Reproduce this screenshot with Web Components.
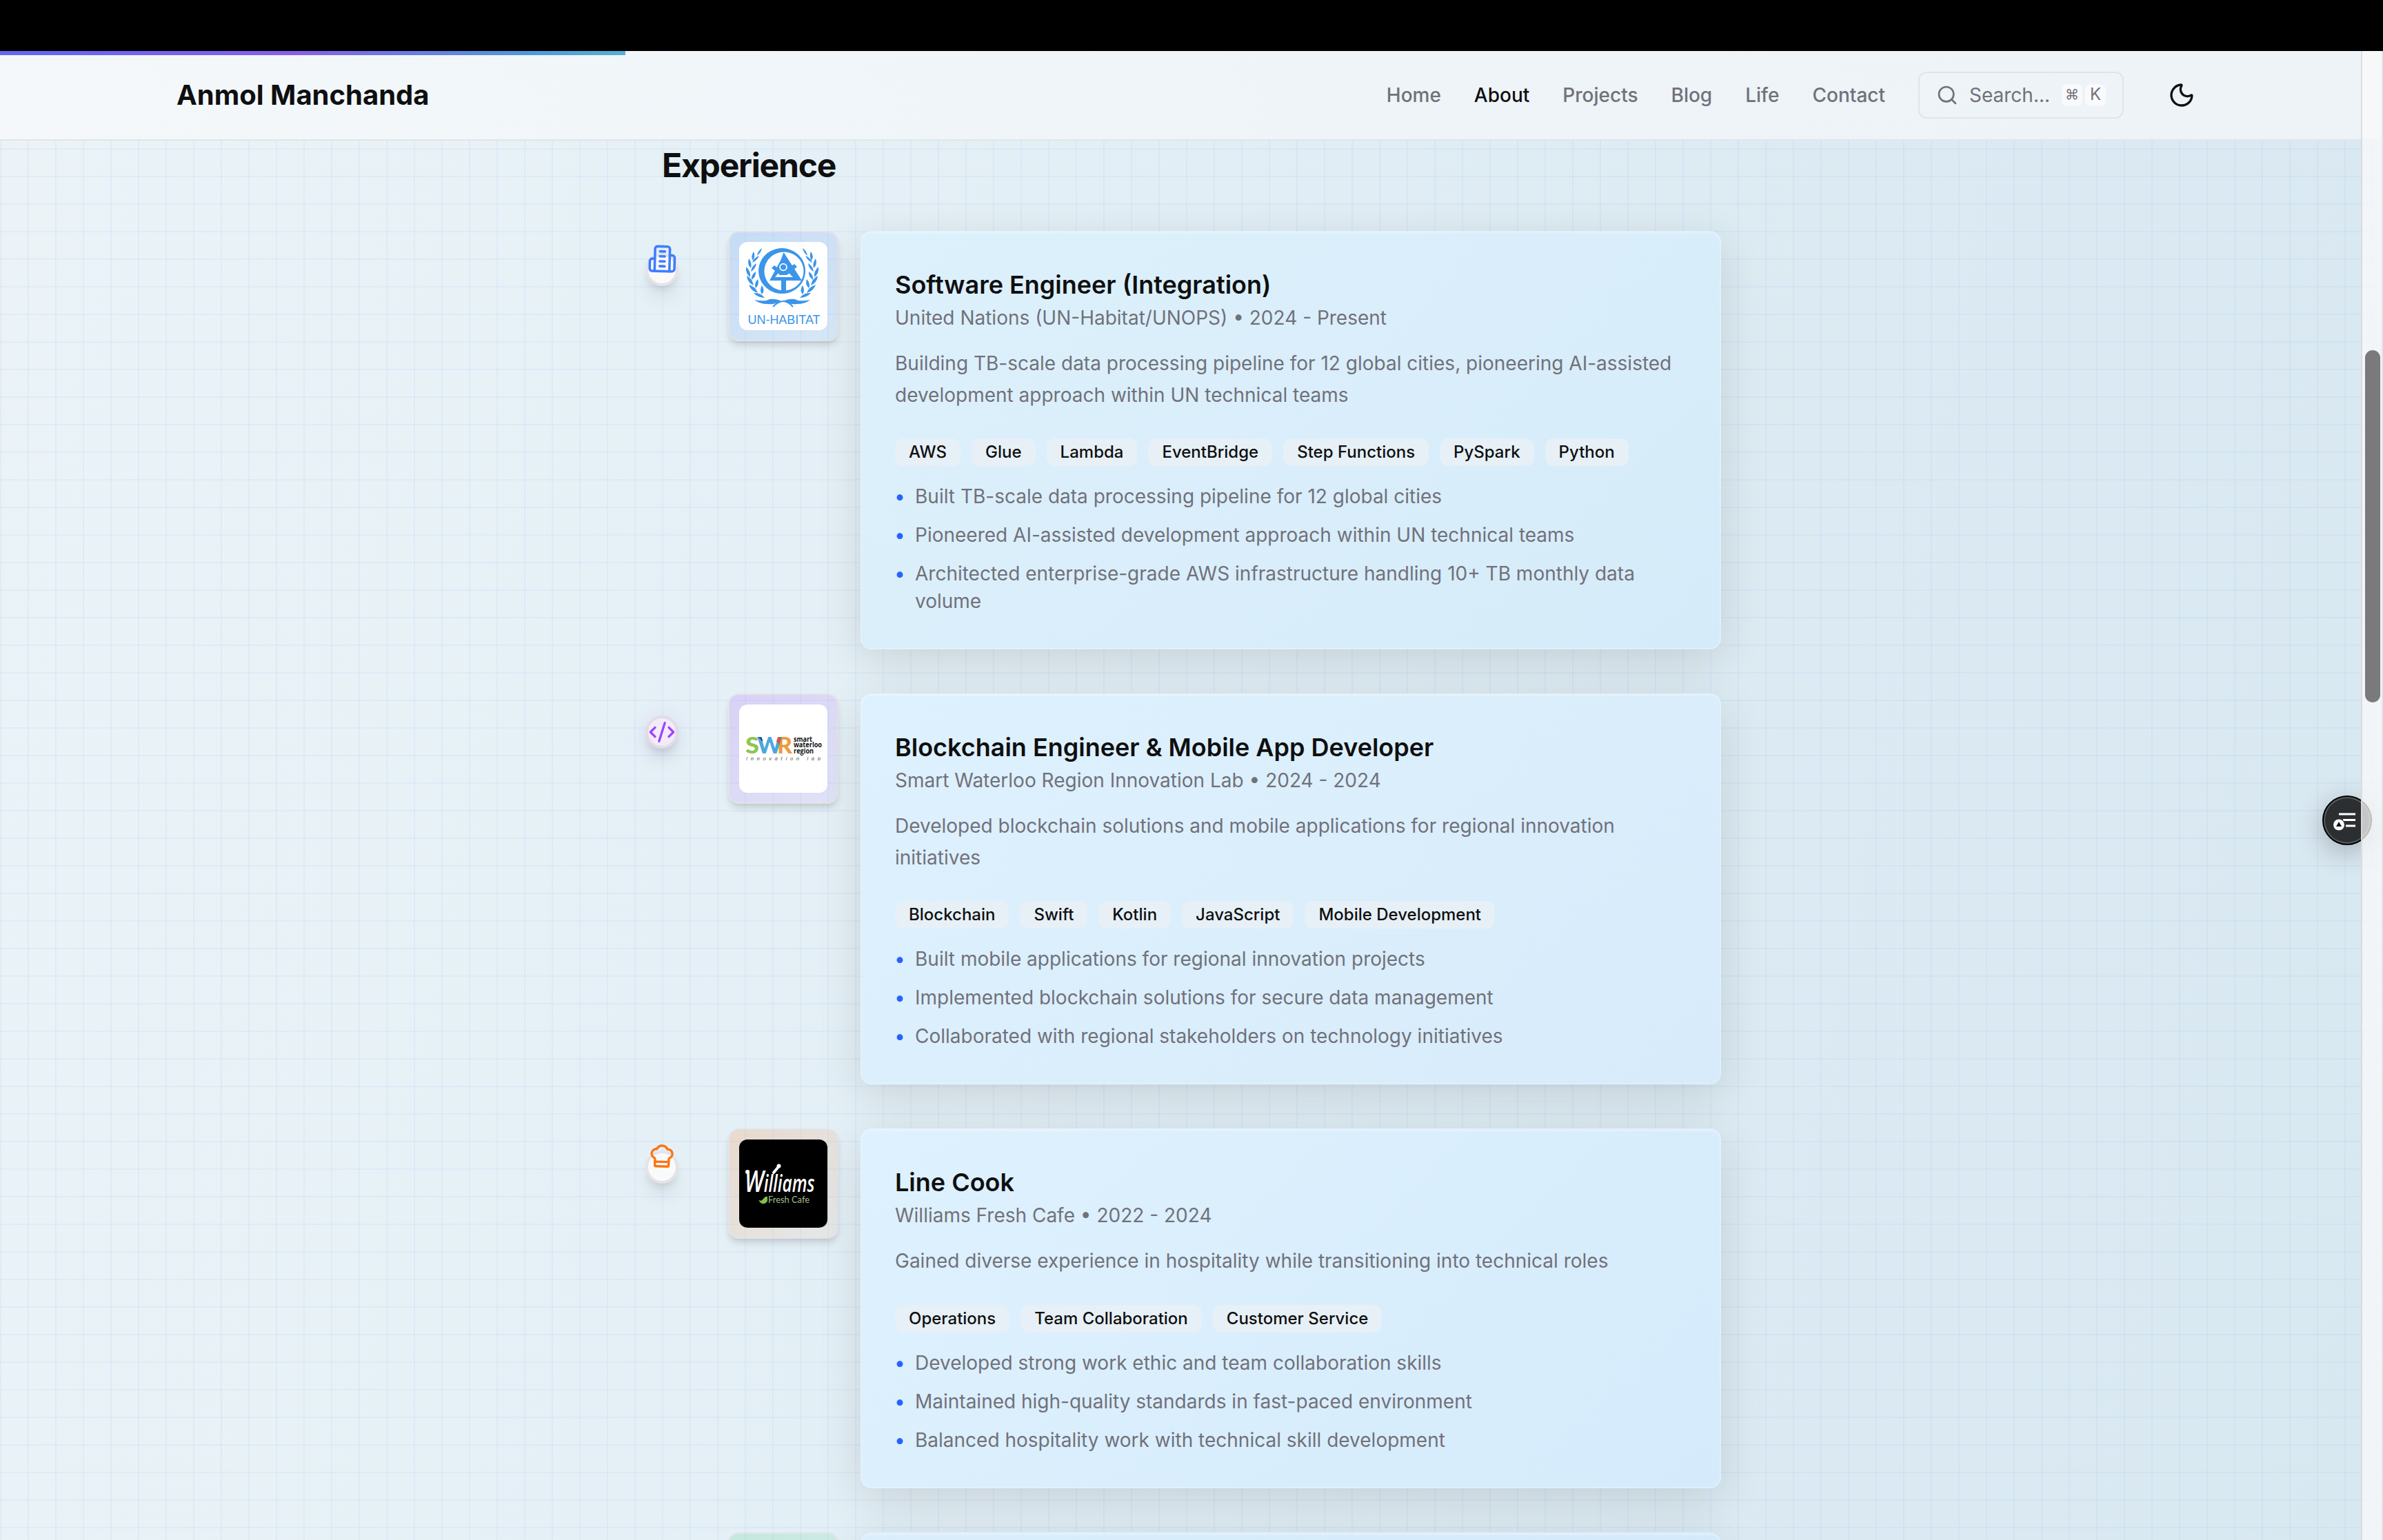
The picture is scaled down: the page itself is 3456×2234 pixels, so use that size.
<!DOCTYPE html>
<html lang="en">
<head>
<meta charset="utf-8">
<title>Anmol Manchanda</title>
<style>
html,body{margin:0;height:100%}
body{height:2234px;overflow:hidden;font-family:Inter,"Noto Sans",sans-serif;color:#0f0f10;background:#000}
</style>
</head>
<body>
<portfolio-page>
  <site-header slot="header" name="Anmol Manchanda">
    <nav-link>Home</nav-link>
    <nav-link active>About</nav-link>
    <nav-link>Projects</nav-link>
    <nav-link>Blog</nav-link>
    <nav-link>Life</nav-link>
    <nav-link>Contact</nav-link>
    <search-box slot="tools"></search-box>
    <theme-toggle slot="tools"></theme-toggle>
  </site-header>

  <timeline-section heading="Experience">
    <timeline-item style="--tint-a:rgba(59,130,246,.19);--tint-b:rgba(59,130,246,.08)">
      <timeline-dot slot="dot" icon="building" style="--ink:#3f7dff;--lift:-16px;--size:43px;--tilt:1.5deg"></timeline-dot>
      <logo-un slot="logo"></logo-un>
      <exp-card role-title="Software Engineer (Integration)" meta="United Nations (UN-Habitat/UNOPS) • 2024 - Present" style="--card-a:#ddf1fc;--card-b:#d6ebf9">
        Building TB-scale data processing pipeline for 12 global cities, pioneering AI-assisted development approach within UN technical teams
        <skill-badge slot="skills">AWS</skill-badge><skill-badge slot="skills">Glue</skill-badge><skill-badge slot="skills">Lambda</skill-badge><skill-badge slot="skills">EventBridge</skill-badge><skill-badge slot="skills">Step Functions</skill-badge><skill-badge slot="skills">PySpark</skill-badge><skill-badge slot="skills">Python</skill-badge>
        <bullet-line slot="points">Built TB-scale data processing pipeline for 12 global cities</bullet-line>
        <bullet-line slot="points">Pioneered AI-assisted development approach within UN technical teams</bullet-line>
        <bullet-line slot="points">Architected enterprise-grade AWS infrastructure handling 10+ TB monthly data volume</bullet-line>
      </exp-card>
    </timeline-item>

    <timeline-item style="--tint-a:rgba(168,85,247,.2);--tint-b:rgba(168,85,247,.08)">
      <timeline-dot slot="dot" icon="code" style="--ink:#a043ff;--dot-bg:#f2ecfa;--dot-line:#e2dce7;--glow:rgba(168,85,247,.12);--size:40px;--tilt:0deg"></timeline-dot>
      <logo-swr slot="logo"></logo-swr>
      <exp-card role-title="Blockchain Engineer &amp; Mobile App Developer" meta="Smart Waterloo Region Innovation Lab • 2024 - 2024" style="--card-a:#def1fe;--card-b:#d7ebfa">
        Developed blockchain solutions and mobile applications for regional innovation initiatives
        <skill-badge slot="skills">Blockchain</skill-badge><skill-badge slot="skills">Swift</skill-badge><skill-badge slot="skills">Kotlin</skill-badge><skill-badge slot="skills">JavaScript</skill-badge><skill-badge slot="skills">Mobile Development</skill-badge>
        <bullet-line slot="points">Built mobile applications for regional innovation projects</bullet-line>
        <bullet-line slot="points">Implemented blockchain solutions for secure data management</bullet-line>
        <bullet-line slot="points">Collaborated with regional stakeholders on technology initiatives</bullet-line>
      </exp-card>
    </timeline-item>

    <timeline-item style="--tint-a:rgba(249,115,22,.18);--tint-b:rgba(249,115,22,.06)">
      <timeline-dot slot="dot" icon="chef" style="--ink:#fb7412;--lift:-16px;--size:40px;--tilt:1.5deg"></timeline-dot>
      <logo-williams slot="logo"></logo-williams>
      <exp-card role-title="Line Cook" meta="Williams Fresh Cafe • 2022 - 2024" style="--card-a:#def1fe;--card-b:#d5ebfb">
        Gained diverse experience in hospitality while transitioning into technical roles
        <skill-badge slot="skills">Operations</skill-badge><skill-badge slot="skills">Team Collaboration</skill-badge><skill-badge slot="skills">Customer Service</skill-badge>
        <bullet-line slot="points">Developed strong work ethic and team collaboration skills</bullet-line>
        <bullet-line slot="points">Maintained high-quality standards in fast-paced environment</bullet-line>
        <bullet-line slot="points">Balanced hospitality work with technical skill development</bullet-line>
      </exp-card>
    </timeline-item>

    <timeline-item style="--tint-a:rgba(34,197,94,.16);--tint-b:rgba(34,197,94,.08)">
      <exp-card style="--card-a:#daeefc;--card-b:#d4eafb"></exp-card>
    </timeline-item>
  </timeline-section>

  <reader-button slot="overlay"></reader-button>
  <page-scrollbar slot="overlay"></page-scrollbar>
</portfolio-page>

<script>
const define = (name, html, setup) => {
  const template = document.createElement('template');
  template.innerHTML = html;
  customElements.define(name, class extends HTMLElement {
    constructor() {
      super();
      this.attachShadow({ mode: 'open' }).append(template.content.cloneNode(true));
    }
    connectedCallback() { if (setup) setup(this, this.shadowRoot); }
  });
};

define('portfolio-page', `
<style>
:host{display:flex;flex-direction:column;height:2234px;overflow:hidden;position:relative}
.top{flex:none;height:74px;background:#000}
.view{flex:1;min-height:0;display:flex;flex-direction:column;overflow:hidden;
 background:
 repeating-linear-gradient(90deg,rgba(99,132,246,.065) 0 2px,transparent 2px 40px),
 repeating-linear-gradient(180deg,rgba(99,132,246,.065) 0 2px,transparent 2px 40px) 0 -19px/100% 2240px,
 linear-gradient(100deg,#ebf3f7 0%,#e4f0f6 35%,#ddebf3 65%,#d8e8f1 100%)}
</style>
<div class="top"></div>
<div class="view"><slot name="header"></slot><slot></slot></div>
<slot name="overlay"></slot>`);

define('site-header', `
<style>
:host{display:block;flex:none;box-sizing:border-box;height:130px;border-bottom:2px solid #e3e4e7;
 background:linear-gradient(90deg,#f4f8fb,#eef4f8 60%,#edf3f7);position:relative}
.progress{position:absolute;left:0;top:0;width:907px;height:6px;background:linear-gradient(90deg,#6366f1,#875feb 48%,#4f97dc 83%,#52b3cf)}
.row{height:128px;padding:0 256px;display:flex;align-items:center;justify-content:space-between}
.name{font-size:40px;font-weight:700;line-height:56px;white-space:nowrap}
.right{display:flex;align-items:center;gap:48px}
</style>
<div class="progress"></div>
<div class="row"><span class="name"></span><div class="right"><slot></slot><slot name="tools"></slot></div></div>`,
(host, root) => { root.querySelector('.name').textContent = host.getAttribute('name'); });

define('nav-link', `
<style>:host{display:block;font-size:28px;line-height:40px;font-weight:500;color:#71717a;white-space:nowrap}
:host([active]){color:#0f0f10}</style><slot></slot>`);

define('search-box', `
<style>
:host{display:flex;align-items:center;box-sizing:border-box;width:298px;height:68px;padding:0 24px;border:2px solid #e3e4e7;border-radius:12px;color:#71717a;font-size:28px;line-height:40px}
svg{width:32px;height:32px;margin-right:16px}
.keys{display:flex;gap:4px;margin-left:auto}
kbd{box-sizing:border-box;width:30px;height:32px;border-radius:8px;background:#f9fafc;font:20px/30px Inter,"DejaVu Sans",sans-serif;text-align:center}
.k{font-size:24px}
</style>
<svg viewBox="0 0 24 24" fill="none" stroke="currentColor" stroke-width="2" stroke-linecap="round"><circle cx="11" cy="11" r="8"/><path d="m21 21-4.3-4.3"/></svg>
<span>Search...</span><span class="keys"><kbd>⌘</kbd><kbd class="k">K</kbd></span>`);

define('theme-toggle', `
<style>:host{display:flex;width:72px;height:72px;align-items:center;justify-content:center}svg{width:40px;height:40px}</style>
<svg viewBox="0 0 24 24" fill="none" stroke="#0f0f10" stroke-width="2" stroke-linecap="round" stroke-linejoin="round"><path d="M20.985 12.486a9 9 0 1 1-9.473-9.472c.405-.022.617.46.402.803a6 6 0 0 0 8.268 8.268c.344-.215.825-.004.803.401"/></svg>`);

define('timeline-section', `
<style>
:host{display:block;width:1536px;margin:0 auto;flex:none}
h2{margin:0;padding-top:6px;font-size:48px;line-height:60px;font-weight:700;letter-spacing:-1.2px;height:125px}
.list{display:flex;flex-direction:column;gap:64px}
</style><h2></h2><div class="list"><slot></slot></div>`,
(host, root) => { root.querySelector('h2').textContent = host.getAttribute('heading'); });

define('timeline-item', `
<style>
:host{display:flex;align-items:flex-start;margin-left:-24px}
.dot{width:48px;margin-right:72px;padding-top:32px;flex:none}
.logo{box-sizing:border-box;width:160px;height:160px;flex:none;margin-right:32px;border:2px solid #e3e3e7;border-radius:16px;
 display:flex;align-items:center;justify-content:center;
 background:linear-gradient(135deg,var(--tint-a),var(--tint-b));box-shadow:0 8px 12px -2px rgba(0,0,0,.12),0 4px 8px -4px rgba(0,0,0,.1)}
.body{flex:1;min-width:0;display:block}
</style>
<div class="dot"><slot name="dot"></slot></div><div class="logo"><slot name="logo"></slot></div><div class="body"><slot></slot></div>`);

const icons = {
  building: '<path d="M6 22V4a2 2 0 0 1 2-2h8a2 2 0 0 1 2 2v18Z"/><path d="M6 12H4a2 2 0 0 0-2 2v6a2 2 0 0 0 2 2h2"/><path d="M18 9h2a2 2 0 0 1 2 2v9a2 2 0 0 1-2 2h-2"/><path d="M10 6h4M10 10h4M10 14h4M10 18h4"/>',
  code: '<path d="m18 16 4-4-4-4"/><path d="m6 8-4 4 4 4"/><path d="m14.5 4-5 16"/>',
  chef: '<path d="M17 21a1 1 0 0 0 1-1v-5.35c0-.457.316-.844.727-1.041a4 4 0 0 0-2.134-7.589 5 5 0 0 0-9.186 0 4 4 0 0 0-2.134 7.588c.411.198.727.585.727 1.041V20a1 1 0 0 0 1 1Z"/><path d="M6 17h12"/>'
};
define('timeline-dot', `
<style>
:host{display:flex;box-sizing:border-box;width:48px;height:48px;border-radius:50%;border:4px solid var(--dot-line,#e4e4e7);background:var(--dot-bg,#fafafb);
 align-items:center;justify-content:center;box-shadow:0 20px 30px -6px rgba(0,0,0,.1),0 8px 12px -4px rgba(0,0,0,.1),0 0 30px var(--glow,transparent)}
svg{flex:none;width:var(--size);height:var(--size);overflow:visible;transform:translateY(var(--lift,0px)) rotate(var(--tilt))}
</style>
<svg viewBox="0 0 24 24" fill="none" stroke="var(--ink)" stroke-width="2" stroke-linecap="round" stroke-linejoin="round"></svg>`,
(host, root) => { root.querySelector('svg').innerHTML = icons[host.getAttribute('icon')]; });

define('exp-card', `
<style>
:host{display:block;box-sizing:border-box;min-height:120px;padding:48px;border:2px solid rgba(255,255,255,.22);border-radius:16px;
 background:linear-gradient(135deg,var(--card-a),var(--card-b)) border-box;
 box-shadow:0 16px 64px rgba(0,0,0,.12),inset 0 2px 0 rgba(255,255,255,.22)}
h3{margin:0;font-size:36px;line-height:56px;font-weight:600}
.meta{font-size:28px;line-height:40px;color:#71717a}
.desc{margin-top:24px;font-size:28px;line-height:45.5px;color:#71717a}
.skills{display:flex;gap:16px;margin-top:40px}
.points{display:flex;flex-direction:column;gap:16px;margin-top:24px}
:host(:not([role-title])) .in{display:none}
</style>
<div class="in"><h3></h3><div class="meta"></div><div class="desc"><slot></slot></div><div class="skills"><slot name="skills"></slot></div><div class="points"><slot name="points"></slot></div></div>`,
(host, root) => {
  root.querySelector('h3').textContent = host.getAttribute('role-title') || '';
  root.querySelector('.meta').textContent = host.getAttribute('meta') || '';
});

define('skill-badge', `
<style>:host{display:block;padding:0 20px;height:40px;line-height:40px;border-radius:12px;background:#e6f0f6;font-size:24px;font-weight:500;color:#0f0f10;white-space:nowrap}</style><slot></slot>`);

define('bullet-line', `
<style>:host{display:flex;gap:16px;font-size:28px;line-height:40px;color:#71717a}.b{color:#2563ff;flex:none;width:13px;margin-left:-1px;margin-right:1px}</style><span class="b">•</span><span><slot></slot></span>`);

const laurel = 'M33 9q-6 4-7 11q6-5 7-11ZM21 14q-5 7-1 13q4-7 1-13ZM29 20q-8 3-10 10q7-3 10-10ZM14 24q-3 9 3 14q2-8-3-14ZM25 31q-7 4-8 12q7-4 8-12ZM10 36q-1 10 6 15q1-9-6-15ZM24 43q-7 5-6 12q7-5 6-12ZM11 49q1 10 10 14q-2-10-10-14ZM27 54q-6 6-3 13q6-6 3-13ZM14 62q3 9 13 12q-3-9-13-12ZM33 63q-4 7 0 13q5-6 0-13ZM21 74q6 7 16 7q-6-8-16-7ZM22 84q16 3 22-1q10-1 17 3q-9 5-20 4q-11 0-19-6Z';
define('logo-un', `
<style>:host{display:block}svg{display:block;width:128px;height:128px;border-radius:12px;background:#fff}</style>
<svg viewBox="0 0 128 128" fill="#3b95ea">
<path fill-rule="evenodd" d="M62 9a34 33 0 1 0 .1 0ZM65 14.500a28.500 28 0 1 1-.1 0Z"/>
<path fill-rule="evenodd" d="M64.500 15 91 56H68V73h-7V56H44L60 27ZM57 45l-5 6h26l-6-6Z"/>
<path d="M47 38l4-4 8 6 10 0 11-8 4 4-12 10-3 2H59l-3-3Z"/>
<circle cx="64" cy="36.500" r="5.800" fill="#fff"/><circle cx="64" cy="36.500" r="4"/>
<path d="${laurel}"/><path transform="translate(125 0) scale(-1 1)" d="${laurel}"/>
<path d="M49 94q8-8 15-8t14 8" fill="none" stroke="#3b95ea" stroke-width="2"/>
<text x="12.500" y="118.500" font-family="Liberation Sans,sans-serif" font-size="17.500" textLength="105" lengthAdjust="spacingAndGlyphs">UN-HABITAT</text>
</svg>`);

define('logo-swr', `
<style>:host{display:block}svg{display:block;width:128px;height:128px;border-radius:12px;background:#fff}</style>
<svg viewBox="0 0 128 128" font-family="Open Sans,sans-serif">
<g font-family="Lato,sans-serif" font-weight="900" font-size="33">
<text x="9" y="71" fill="#8cc750" textLength="20" lengthAdjust="spacingAndGlyphs">S</text>
<text x="55" y="71" fill="#ef9a3a" textLength="22" lengthAdjust="spacingAndGlyphs">R</text>
<text x="26" y="71" fill="#4aa8e0" textLength="36" lengthAdjust="spacingAndGlyphs">W</text></g>
<path d="M26.500 47.500h6l2 6q-3-1-4-4Z" fill="#253a7c"/><path d="M56 47.500h5l-3 10-4-4Z" fill="#dd5443"/>
<g font-size="11" font-weight="700" fill="#111">
<text x="79" y="53.500" textLength="27" lengthAdjust="spacingAndGlyphs">smart</text>
<text x="79" y="62" textLength="41" lengthAdjust="spacingAndGlyphs">waterloo</text>
<text x="79" y="71" textLength="29" lengthAdjust="spacingAndGlyphs">region</text></g>
<text x="10" y="80.500" font-size="7.500" font-style="italic" fill="#444" textLength="108">Innovation lab</text>
</svg>`);

define('logo-williams', `
<style>:host{display:block}svg{display:block;width:128px;height:128px;border-radius:12px;background:#000}</style>
<svg viewBox="0 0 128 128">
<g transform="translate(8 76) scale(.72 1)">
<text fill="#fff" font-family="Open Sans,sans-serif" font-weight="600" font-style="italic" font-size="34"><tspan font-size="44">W</tspan>illiams</text></g>
<circle cx="12" cy="47" r="3" fill="#fff"/><path d="M50 48 57.500 39" stroke="#fff" stroke-width="4" stroke-linecap="round"/><circle cx="57.500" cy="38.500" r="3" fill="#fff"/>
<path d="M28 88q5 2 7-2 3-4 6-3 0 4 0 6-2 5-8 4-3-1-5-5Z" fill="#83bd52"/>
<text x="42" y="91.500" font-family="Lato,sans-serif" font-size="13" fill="#a3bf8c" textLength="60" lengthAdjust="spacingAndGlyphs">Fresh Cafe</text>
</svg>`);

define('reader-button', `
<style>
:host{position:absolute;left:3368px;top:1154px;width:72px;height:72px;border-radius:50%;background:#2b2f31;box-sizing:border-box;border:2px solid #000;
 box-shadow:inset 0 0 0 2px #5b5d5e,0 10px 40px rgba(0,0,0,.25)}
svg{display:block;width:68px;height:68px}
</style>
<svg viewBox="3370 1156 68 68"><path d="M3392 1181h24M3398 1189.500h18M3402 1198h14" stroke="#fff" stroke-width="3"/><circle cx="3392" cy="1196.500" r="9" fill="#2b2f31"/><circle cx="3392" cy="1196.500" r="8" fill="#fff"/><path d="m3392 1192 4 7h-8Z" fill="#111"/></svg>`);

define('page-scrollbar', `
<style>
:host{position:absolute;right:0;top:74px;bottom:0;width:32px;box-sizing:border-box;border-left:2px solid rgba(217,217,220,.9);border-right:2px solid rgba(225,227,230,.9);background:rgba(250,250,250,.75)}
.thumb{position:absolute;left:4px;top:434px;width:22px;height:511px;border-radius:11px;background:#7a7a7c}
</style><div class="thumb"></div>`);
</script>
</body>
</html>
